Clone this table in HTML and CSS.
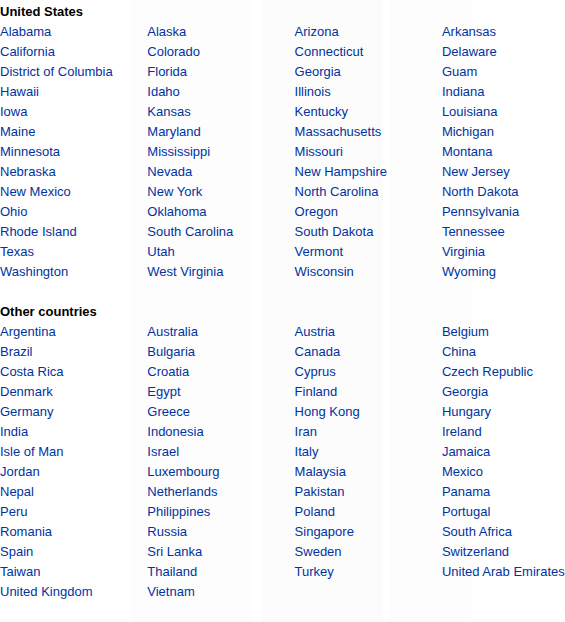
FILE: index.html
```html
<!DOCTYPE html>
<html lang="en">
<head>
<meta charset="utf-8">
<title>Locations</title>
<link rel="stylesheet" href="styles.css">
</head>
<body>
<div class="page">
  <section class="group">
    <h3 class="group-title">United States</h3>
    <ul class="list">
      <li><a href="#">Alabama</a></li><li><a href="#">Alaska</a></li><li><a href="#">Arizona</a></li><li><a href="#">Arkansas</a></li>
      <li><a href="#">California</a></li><li><a href="#">Colorado</a></li><li><a href="#">Connecticut</a></li><li><a href="#">Delaware</a></li>
      <li><a href="#">District of Columbia</a></li><li><a href="#">Florida</a></li><li><a href="#">Georgia</a></li><li><a href="#">Guam</a></li>
      <li><a href="#">Hawaii</a></li><li><a href="#">Idaho</a></li><li><a href="#">Illinois</a></li><li><a href="#">Indiana</a></li>
      <li><a href="#">Iowa</a></li><li><a href="#">Kansas</a></li><li><a href="#">Kentucky</a></li><li><a href="#">Louisiana</a></li>
      <li><a href="#">Maine</a></li><li><a href="#">Maryland</a></li><li><a href="#">Massachusetts</a></li><li><a href="#">Michigan</a></li>
      <li><a href="#">Minnesota</a></li><li><a href="#">Mississippi</a></li><li><a href="#">Missouri</a></li><li><a href="#">Montana</a></li>
      <li><a href="#">Nebraska</a></li><li><a href="#">Nevada</a></li><li><a href="#">New Hampshire</a></li><li><a href="#">New Jersey</a></li>
      <li><a href="#">New Mexico</a></li><li><a href="#">New York</a></li><li><a href="#">North Carolina</a></li><li><a href="#">North Dakota</a></li>
      <li><a href="#">Ohio</a></li><li><a href="#">Oklahoma</a></li><li><a href="#">Oregon</a></li><li><a href="#">Pennsylvania</a></li>
      <li><a href="#">Rhode Island</a></li><li><a href="#">South Carolina</a></li><li><a href="#">South Dakota</a></li><li><a href="#">Tennessee</a></li>
      <li><a href="#">Texas</a></li><li><a href="#">Utah</a></li><li><a href="#">Vermont</a></li><li><a href="#">Virginia</a></li>
      <li><a href="#">Washington</a></li><li><a href="#">West Virginia</a></li><li><a href="#">Wisconsin</a></li><li><a href="#">Wyoming</a></li>
    </ul>
  </section>
  <section class="group group-spaced">
    <h3 class="group-title">Other countries</h3>
    <ul class="list">
      <li><a href="#">Argentina</a></li><li><a href="#">Australia</a></li><li><a href="#">Austria</a></li><li><a href="#">Belgium</a></li>
      <li><a href="#">Brazil</a></li><li><a href="#">Bulgaria</a></li><li><a href="#">Canada</a></li><li><a href="#">China</a></li>
      <li><a href="#">Costa Rica</a></li><li><a href="#">Croatia</a></li><li><a href="#">Cyprus</a></li><li><a href="#">Czech Republic</a></li>
      <li><a href="#">Denmark</a></li><li><a href="#">Egypt</a></li><li><a href="#">Finland</a></li><li><a href="#">Georgia</a></li>
      <li><a href="#">Germany</a></li><li><a href="#">Greece</a></li><li><a href="#">Hong Kong</a></li><li><a href="#">Hungary</a></li>
      <li><a href="#">India</a></li><li><a href="#">Indonesia</a></li><li><a href="#">Iran</a></li><li><a href="#">Ireland</a></li>
      <li><a href="#">Isle of Man</a></li><li><a href="#">Israel</a></li><li><a href="#">Italy</a></li><li><a href="#">Jamaica</a></li>
      <li><a href="#">Jordan</a></li><li><a href="#">Luxembourg</a></li><li><a href="#">Malaysia</a></li><li><a href="#">Mexico</a></li>
      <li><a href="#">Nepal</a></li><li><a href="#">Netherlands</a></li><li><a href="#">Pakistan</a></li><li><a href="#">Panama</a></li>
      <li><a href="#">Peru</a></li><li><a href="#">Philippines</a></li><li><a href="#">Poland</a></li><li><a href="#">Portugal</a></li>
      <li><a href="#">Romania</a></li><li><a href="#">Russia</a></li><li><a href="#">Singapore</a></li><li><a href="#">South Africa</a></li>
      <li><a href="#">Spain</a></li><li><a href="#">Sri Lanka</a></li><li><a href="#">Sweden</a></li><li><a href="#">Switzerland</a></li>
      <li><a href="#">Taiwan</a></li><li><a href="#">Thailand</a></li><li><a href="#">Turkey</a></li><li><a href="#">United Arab Emirates</a></li>
      <li><a href="#">United Kingdom</a></li><li><a href="#">Vietnam</a></li>
    </ul>
  </section>
</div>
</body>
</html>
```
FILE: styles.css
```css
html, body {
  margin: 0;
  padding: 0;
}
body {
  min-height: 622px;
  font-family: "Liberation Sans", Arial, sans-serif;
  font-size: 13px;
  line-height: 20px;
  color: #000;
  background: linear-gradient(to right,
    #ffffff 0, #ffffff 131px,
    #fdfdfd 131px, #fdfdfd 251px,
    #ffffff 251px, #ffffff 262px,
    #fcfcfc 262px, #fcfcfc 383px,
    #ffffff 383px, #ffffff 390px,
    #fdfdfd 390px, #fdfdfd 471px,
    #ffffff 471px) no-repeat;
  overflow: hidden;
}
.page {
  width: 590px;
  padding-top: 2px;
}
.group-title {
  margin: 0;
  font-size: 13px;
  font-weight: bold;
  line-height: 20px;
}
.group-spaced {
  margin-top: 20px;
}
.list {
  list-style: none;
  margin: 0;
  padding: 0;
  display: grid;
  grid-template-columns: repeat(4, 147.3px);
}
.list li {
  white-space: nowrap;
  line-height: 20px;
}
.list a {
  color: #0033a0;
  text-decoration: none;
}
```
